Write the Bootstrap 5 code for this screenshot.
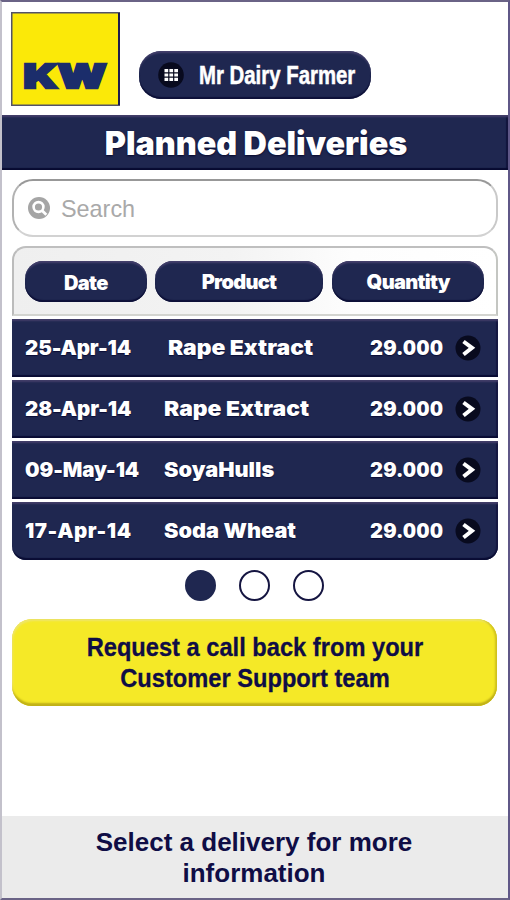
<!DOCTYPE html>
<html lang="en">
<head>
<meta charset="utf-8">
<meta name="viewport" content="width=device-width, initial-scale=1">
<title>Planned Deliveries</title>
<link href="https://cdn.jsdelivr.net/npm/bootstrap@5.3.0/dist/css/bootstrap.min.css" rel="stylesheet">
<style>
:root { --navy: #1f2750; --ink: #0f0d45; }
body { font-family: "Liberation Sans", Arial, sans-serif; background: #fff; }
.screen { width: 510px; height: 900px; border: 2px solid; border-color: #6a6386 #5f5787 #6a6386 #c3c1cb; overflow: hidden; }
.heavy { font-family: Inter, "Arial Black", sans-serif; font-weight: 900; }
.screen svg { flex: none; }
.top-area { height: 113px; padding: 10px 0 0 9px; }
.logo { width: 109px; height: 94px; }
.pill { background: var(--navy); color: #fff; border: 0; box-shadow: inset 0 3px 2px -1px #45406c, inset 0 -2px 1px #0d1038; white-space: nowrap; }
.user-pill { width: 232px; height: 48px; margin: 39px 0 0 19px; padding: 2px 0 0 19px; border-radius: 22px; font-size: 25px; font-weight: 700; }
.user-pill svg { margin: -2px 15px 0 0; }
.squeeze { display: inline-block; transform-origin: 0 50%; }
.user-pill .squeeze { transform: scaleX(.815); -webkit-text-stroke: .5px #fff; }
.title-bar { height: 55px; background: var(--navy); color: #fff; font-size: 32.3px; line-height: 58px; padding-left: 2px; text-shadow: 0 1px 2px #07092e; box-shadow: inset 0 3px 2px -1px #453f6a, inset 0 -3px 1px -1px #070a30, inset -2px 0 1px #11143c; }
.search-box { height: 58px; margin: 9px 10px 0; padding: 2px 0 0 14px; border: 2px solid; border-color: #989898 #c9c9c9 #d2d2d2 #b2b2b2; border-radius: 21px; font-size: 23.4px; color: #a9a9a9; }
.search-box svg { margin-right: 11px; margin-top: -2px; }
.search-box span { padding-top: 1px; }
.table-area { margin: 9px 10px 0; }
.head-row { height: 70px; padding: 0 12px; border: 2px solid; border-color: #bfbfbf #c4c6c2 #d3d4d0 #bbb; border-radius: 14px 14px 0 0; background: linear-gradient(90deg, #efefef, #f3f3f3 45%, #fdfdfd 70%, #fff); }
.head-row .pill { height: 41px; border-radius: 18px; font-size: 20px; letter-spacing: -.7px; padding-top: 2px; }
.head-row .w-date { width: 122px; margin-left: -1px; padding-top: 3px; } .w-product { width: 169px; margin-left: 8px; } .w-quantity { width: 152px; margin-left: 9px; }
.delivery { height: 58px; margin-top: 2.9px; background: var(--navy); color: #fff; font-size: 20.5px; box-shadow: inset 0 3px 2px -1px #433e69, inset 0 -3px 1px -1px #090c33, inset -2px 0 1px #141740; white-space: nowrap; text-shadow: 0 1px 1px #0a0d35; }
.delivery:last-child { border-radius: 0 0 14px 14px; }
.delivery span { padding-top: 1px; }
.delivery svg { margin-top: 1px; }
.c-date { width: 152px; padding-left: 13px; letter-spacing: -.12px; }
.delivery:last-child .c-date { letter-spacing: .55px; }
.c-product { width: 200px; transform: scaleX(1.115); transform-origin: 0 50%; }
.c-product.short { transform: scaleX(1.06); }
.first .c-product { padding-left: 3.5px; }
.c-qty { width: 85px; margin-left: 6px; font-size: 20px; letter-spacing: .6px; font-variant-numeric: tabular-nums; }
.dots { height: 59px; gap: 23px; padding: 10px 1px 0 0; }
.dot { width: 31px; height: 31px; border: 2.5px solid #151541; border-radius: 50%; }
.dot.on { background: var(--navy); border-color: var(--navy); }
.call-btn { width: 485px; height: 87px; margin: 0 10px; padding-top: 2px; border: 0; border-radius: 20px; background: #f5e927; color: var(--ink); font-size: 26px; font-weight: 700; line-height: 31px; box-shadow: inset 0 -4px 2px -1px #c0b117, inset -3px 0 2px -1px #cfc11d, inset 1px 2px 2px #eee56a; }
.call-btn .squeeze { transform: scaleX(.91); transform-origin: 50% 50%; white-space: nowrap; -webkit-text-stroke: .3px var(--ink); }
.note { height: 82px; margin-top: auto; background: #ebebeb; color: var(--ink); font-size: 26px; line-height: 31px; font-weight: 700; padding: 11px 61px 0 59px; }
</style>
</head>
<body>
<main class="screen d-flex flex-column">
  <header class="top-area d-flex align-items-start">
    <svg class="logo" viewBox="0 0 109 94" role="img" aria-label="KW">
      <rect x=".75" y=".75" width="107.5" height="92.5" fill="#fbe908" stroke="#535268" stroke-width="1.5"/>
      <path d="M108 1V93" stroke="#1c1c50" stroke-width="2"/>
      <text x="12.500" y="76" font-family="Inter, sans-serif" font-weight="900" font-size="32.5" textLength="83" lengthAdjust="spacingAndGlyphs" fill="#1b2d6b" stroke="#1b2d6b" stroke-width="2.4">KW</text>
    </svg>
    <button class="pill user-pill d-flex align-items-center">
      <svg width="26" height="26" viewBox="0 0 26 26" fill="#fff"><circle cx="13" cy="13" r="12.8" fill="#080a1e"/><path d="M6.500 7h3.700v3.200H6.500zM11.400 7h3.700v3.200h-3.700zM16.300 7H20v3.200h-3.700zM6.500 11.400h3.700v3.200H6.500zM11.400 11.400h3.700v3.200h-3.700zM16.300 11.400H20v3.200h-3.700zM6.500 15.800h3.700V19H6.500zM11.400 15.800h3.700V19h-3.700zM16.300 15.800H20V19h-3.700z"/></svg>
      <span class="squeeze">Mr Dairy Farmer</span>
    </button>
  </header>
  <h1 class="title-bar heavy text-center mb-0">Planned Deliveries</h1>
  <div class="search-box d-flex align-items-center">
    <svg width="22" height="22" viewBox="0 0 22 22" fill="none"><circle cx="11" cy="11" r="11" fill="#a5a5a5"/><circle cx="10.500" cy="10" r="4.900" stroke="#fff" stroke-width="2.600"/><path d="M14 13.500l4.300 4.300" stroke="#fff" stroke-width="2.800"/></svg>
    <span>Search</span>
  </div>
  <section class="table-area">
    <div class="head-row heavy d-flex align-items-center">
      <div class="pill w-date d-flex align-items-center justify-content-center">Date</div>
      <div class="pill w-product d-flex align-items-center justify-content-center">Product</div>
      <div class="pill w-quantity d-flex align-items-center justify-content-center">Quantity</div>
    </div>
    <div class="delivery first heavy d-flex align-items-center">
      <span class="c-date">25-Apr-14</span><span class="c-product">Rape Extract</span><span class="c-qty">29.000</span>
      <svg width="26" height="26" viewBox="0 0 26 26" fill="none"><circle cx="13" cy="13" r="12.500" fill="#080a1e"/><path d="M8.500 6.500l8.500 6.300-8.500 6.700" stroke="#fff" stroke-width="4"/></svg>
    </div>
    <div class="delivery heavy d-flex align-items-center">
      <span class="c-date">28-Apr-14</span><span class="c-product">Rape Extract</span><span class="c-qty">29.000</span>
      <svg width="26" height="26" viewBox="0 0 26 26" fill="none"><circle cx="13" cy="13" r="12.500" fill="#080a1e"/><path d="M8.500 6.500l8.500 6.300-8.500 6.700" stroke="#fff" stroke-width="4"/></svg>
    </div>
    <div class="delivery heavy d-flex align-items-center">
      <span class="c-date">09-May-14</span><span class="c-product short">SoyaHulls</span><span class="c-qty">29.000</span>
      <svg width="26" height="26" viewBox="0 0 26 26" fill="none"><circle cx="13" cy="13" r="12.500" fill="#080a1e"/><path d="M8.500 6.500l8.500 6.300-8.500 6.700" stroke="#fff" stroke-width="4"/></svg>
    </div>
    <div class="delivery heavy d-flex align-items-center">
      <span class="c-date">17-Apr-14</span><span class="c-product short">Soda Wheat</span><span class="c-qty">29.000</span>
      <svg width="26" height="26" viewBox="0 0 26 26" fill="none"><circle cx="13" cy="13" r="12.500" fill="#080a1e"/><path d="M8.500 6.500l8.500 6.300-8.500 6.700" stroke="#fff" stroke-width="4"/></svg>
    </div>
  </section>
  <div class="dots d-flex justify-content-center align-items-start">
    <span class="dot on"></span><span class="dot"></span><span class="dot"></span>
  </div>
  <button class="call-btn"><span class="squeeze">Request a call back from your<br>Customer Support team</span></button>
  <footer class="note text-center">Select a delivery for more information</footer>
</main>
<script src="https://cdn.jsdelivr.net/npm/bootstrap@5.3.0/dist/js/bootstrap.bundle.min.js"></script>
</body>
</html>
